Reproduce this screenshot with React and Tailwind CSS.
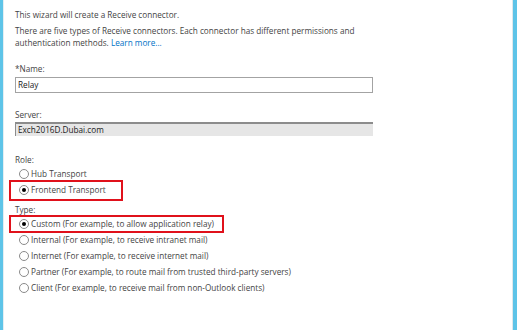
import React from "react";

function Radio({ checked }) {
  return (
    <span className="relative inline-block w-[10px] h-[10px] rounded-full border border-[#8a8a8a] bg-white shrink-0">
      {checked && (
        <span className="absolute left-[2px] top-[2px] w-[4px] h-[4px] rounded-full bg-black" />
      )}
    </span>
  );
}

function Row({ checked, children, box }) {
  return (
    <div className="h-[16px] flex items-center">
      <span className="relative inline-flex items-center h-[16px] pl-[4px]">
        <Radio checked={checked} />
        <span className="ml-[2px] whitespace-nowrap">{children}</span>
        {box}
      </span>
    </div>
  );
}

export default function App() {
  return (
    <div
      className="w-[517px] h-[330px] flex bg-white text-[#444444] text-[8.2px] overflow-hidden"
      style={{ fontFamily: '"Open Sans", "Noto Sans", sans-serif' }}
    >
      <div className="w-[3px] bg-[#5ec4e8]" />
      <div className="w-[1px] bg-[#e4eef2]" />
      <div className="flex-1 pl-[11px] leading-[12px]">
        <div className="mt-[9px] h-[12px]">This wizard will create a Receive connector.</div>
        <div className="mt-[4px]">
          There are five types of Receive connectors. Each connector has different permissions and
          <br />
          authentication methods. <span className="text-[#0072c6]">Learn more...</span>
        </div>
        <div className="mt-[14px] h-[12px]">*Name:</div>
        <div className="mt-[2px] w-[358px] h-[16px] border border-[#a3a3a3] flex items-center pl-[2px] text-[#1a1a1a]">
          Relay
        </div>
        <div className="mt-[16px] h-[12px]">Server:</div>
        <div className="mt-[1px] w-[358px] h-[14px] bg-[#e6e6e6] border-t-2 border-l border-[#8c8c8c] flex items-center pl-[2px] text-[#1a1a1a]">
          Exch2016D.Dubai.com
        </div>
        <div className="mt-[18px] h-[12px]">Role:</div>
        <Row>Hub Transport</Row>
        <Row
          checked
          box={<span className="absolute -left-[6px] -right-[17px] -top-[2px] -bottom-[3px] border-2 border-[#e0111b]" />}
        >
          Frontend Transport
        </Row>
        <div className="mt-[6px] h-[12px]">Type:</div>
        <Row
          checked
          box={<span className="absolute -left-[6px] -right-[10px] -top-[1px] -bottom-[1px] border-2 border-[#e0111b]" />}
        >
          Custom (For example, to allow application relay)
        </Row>
        <Row>Internal (For example, to receive intranet mail)</Row>
        <Row>Internet (For example, to receive internet mail)</Row>
        <Row>Partner (For example, to route mail from trusted third-party servers)</Row>
        <Row>Client (For example, to receive mail from non-Outlook clients)</Row>
      </div>
      <div className="w-[1px] bg-[#dfe8ec]" />
      <div className="w-[4px] bg-[#5ec4e8]" />
    </div>
  );
}
